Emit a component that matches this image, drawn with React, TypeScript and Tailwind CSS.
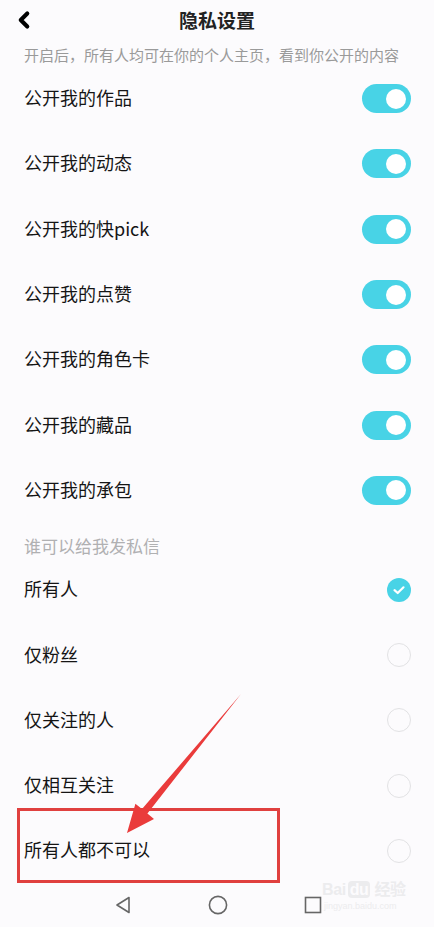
import { ChevronLeft } from 'lucide-react';

const publicItems = [
  '公开我的作品',
  '公开我的动态',
  '公开我的快pick',
  '公开我的点赞',
  '公开我的角色卡',
  '公开我的藏品',
  '公开我的承包',
];

const messageOptions = ['所有人', '仅粉丝', '仅关注的人', '仅相互关注', '所有人都不可以'];

function Toggle() {
  return (
    <div className="w-[49px] h-[29px] rounded-full bg-[#48d3e6] flex items-center justify-end pr-[5px]">
      <div className="w-[20px] h-[20px] rounded-full bg-white" />
    </div>
  );
}

function Radio({ checked }: { checked: boolean }) {
  if (checked) {
    return (
      <div className="w-[24px] h-[24px] rounded-full bg-[#48d3e6] flex items-center justify-center">
        <svg width="14" height="14" viewBox="0 0 14 14" fill="none">
          <path d="M2.5 7.2 L5.7 10 L11.5 4.3" stroke="white" strokeWidth="2.2" strokeLinecap="round" strokeLinejoin="round" />
        </svg>
      </div>
    );
  }
  return <div className="w-[24px] h-[24px] rounded-full border-[1.5px] border-[#e2e2e4]" />;
}

export default function App() {
  return (
    <div
      className="relative w-[434px] h-[927px] overflow-hidden bg-[#fcfbfd] text-[#151515]"
      style={{ fontFamily: '"Noto Sans CJK SC", "Noto Sans", sans-serif' }}
    >
      <div className="relative h-[40px] flex items-center justify-center">
        <ChevronLeft size={26} strokeWidth={3.8} className="absolute left-[11px] top-[7px] text-black" />
        <h1 className="text-[19px] font-bold text-[#222]">隐私设置</h1>
      </div>

      <p className="h-[26px] px-[24px] text-[15px] leading-[30px] text-[#9a9a9a]">
        开启后，所有人均可在你的个人主页，看到你公开的内容
      </p>

      <div>
        {publicItems.map((item) => (
          <div key={item} className="h-[65.3px] pl-[24px] pr-[23px] flex items-center justify-between">
            <span className="text-[18px] -mt-[2px]">{item}</span>
            <Toggle />
          </div>
        ))}
      </div>

      <div className="h-[34px] pt-[12px] px-[24px] text-[17px] leading-[22px] text-[#b0b0b2]">谁可以给我发私信</div>

      <div>
        {messageOptions.map((opt, i) => (
          <div key={opt} className="h-[65.3px] pl-[24px] pr-[23px] flex items-center justify-between">
            <span className="text-[18px] -mt-[2px]">{opt}</span>
            <Radio checked={i === 0} />
          </div>
        ))}
      </div>

      <div className="h-[43px] flex items-center justify-center gap-[76px] pl-[2px]">
        <svg width="18" height="18" viewBox="0 0 18 18" fill="none">
          <path d="M15 1.5 L3 9 L15 16.5 Z" stroke="#666" strokeWidth="1.6" strokeLinejoin="round" />
        </svg>
        <svg width="20" height="20" viewBox="0 0 20 20" fill="none">
          <circle cx="10" cy="10" r="8.6" stroke="#666" strokeWidth="1.6" />
        </svg>
        <svg width="18" height="18" viewBox="0 0 18 18" fill="none">
          <rect x="1.5" y="1.5" width="15" height="15" stroke="#666" strokeWidth="1.6" />
        </svg>
      </div>

      {/* watermark */}
      <div className="absolute left-[322px] top-[878px] text-[#ececee] select-none" style={{ fontFamily: '"Liberation Sans", sans-serif' }}>
        <div className="text-[16px] font-bold leading-[20px] tracking-tight">
          Bai<span className="ml-[2px] px-[2px] rounded-[4px] bg-[#ececee] text-[#fcfbfd]">du</span>{' '}
          <span style={{ fontFamily: '"Noto Sans CJK SC", sans-serif' }}>经验</span>
        </div>
        <div className="text-[9px] leading-[12px] ml-[2px]">jingyan.baidu.com</div>
      </div>

      {/* annotation box */}
      <div className="absolute left-[17px] top-[808px] w-[263px] h-[75px] border-[3px] border-[#e0403f]" />

      {/* annotation arrow */}
      <svg className="absolute left-0 top-0 pointer-events-none" width="434" height="927" viewBox="0 0 434 927">
        <polygon
          points="127,833 135.4,803.7 142,809.1 241,694 147.4,813.5 154,818.9"
          fill="#ea3b3b"
        />
      </svg>
    </div>
  );
}
